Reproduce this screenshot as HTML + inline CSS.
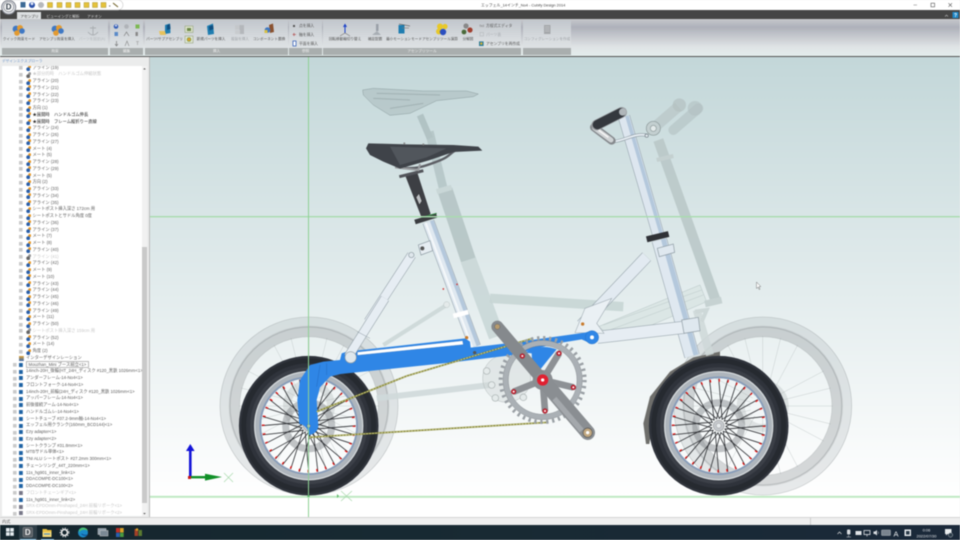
<!DOCTYPE html>
<html lang="ja"><head><meta charset="utf-8"><title>Cubify Design 2014</title>
<style>
html,body{margin:0;padding:0;width:960px;height:540px;overflow:hidden;background:#eee}
body{font-family:"Liberation Sans","Noto Sans CJK JP",sans-serif;position:relative}
#wrap{position:absolute;left:0;top:0;width:960px;height:540px;overflow:hidden;filter:blur(.4px)}
#title{position:absolute;left:0;top:0;width:960px;height:10px;background:#fff}
#tabs{position:absolute;left:0;top:10px;width:960px;height:9px;background:#454545}
#ribbon{position:absolute;left:0;top:19px;width:960px;height:37px;background:linear-gradient(#c6c8cb 0,#aeb1ba 22%,#c8cbd0 50%,#dfe3e5 75%,#e4eeed 100%);border-bottom:1.5px solid #555}
.pn{position:absolute;top:1px;height:35px;background:linear-gradient(#c2c7cd,#d8dcdf 55%,#e2e6e8);border-radius:1px}
.pn i{position:absolute;left:0;right:0;bottom:.5px;height:6.5px;background:#a9aeae;color:#eee;font:normal 3.7px/6.5px "Liberation Sans","Noto Sans CJK JP",sans-serif;text-align:center}
#left{position:absolute;left:0;top:57px;width:150px;height:460px;background:#ebecec;border-right:1px solid #bbb;box-sizing:border-box}
#lt{position:absolute;left:2px;top:0;font-size:3.7px;line-height:8px;color:#6b93c8}
#tree{position:absolute;left:2px;top:9px;width:140px;height:450px;background:#fff;overflow:hidden}
#rows{position:absolute;left:-2px;top:-1.4px;width:150px}
.r{height:6.75px;line-height:6.75px;font-size:4.3px;color:#5c5c5c;white-space:nowrap;padding-left:32.5px;box-sizing:border-box;
background:radial-gradient(circle,#2b5fa8 60%,transparent 66%) 25.5px 2.4px/4.4px 4.4px no-repeat,radial-gradient(circle,#e79a2c 60%,transparent 66%) 28px .6px/3.4px 3.4px no-repeat,linear-gradient(#cacaca,#cacaca) 19.4px 1.6px/3.6px 3.6px no-repeat}
.t{padding-left:26px;background:linear-gradient(#1f63a5,#1f63a5) 18.6px 1.2px/3.8px 4.4px no-repeat,linear-gradient(#cacaca,#cacaca) 12.6px 1.6px/3.6px 3.6px no-repeat}
.g{color:#c8c8c8;background:radial-gradient(circle,#666 60%,transparent 66%) 25.5px 2.4px/4.4px 4.4px no-repeat,radial-gradient(circle,#999 60%,transparent 66%) 28px .6px/3.4px 3.4px no-repeat,linear-gradient(#cacaca,#cacaca) 19.4px 1.6px/3.6px 3.6px no-repeat}
.t.g{background:linear-gradient(#778,#778) 18.6px 1.2px/3.8px 4.4px no-repeat,linear-gradient(#cacaca,#cacaca) 12.6px 1.6px/3.6px 3.6px no-repeat}
.b{color:#222}
.tip span{border:.5px solid #bbb;padding:0 1.5px;background:#fff}
#sb{position:absolute;left:142px;top:9px;width:5px;height:450px;background:#f1f1f1}
#sb b{position:absolute;left:0;top:181px;width:5px;height:256px;background:#c9c9c9}
#status{position:absolute;left:0;top:517px;width:960px;height:8px;background:#efefef;border-top:1px solid #d4d4d4;box-sizing:border-box;font-size:4.2px;line-height:7px;color:#555;padding-left:2px}
#status u{position:absolute;left:810px;top:0;width:1px;height:7px;background:#ccc}
#task{position:absolute;left:0;top:525px;width:960px;height:15px;background:linear-gradient(90deg,#15262e,#182a33 50%,#1b293a)}
svg{position:absolute;left:0;top:0}
svg text{font-family:"Liberation Sans","Noto Sans CJK JP",sans-serif}
</style></head><body><div id="wrap">
<div id="title"></div><div id="tabs"></div>
<div id="ribbon">
<div class="pn" style="left:2px;width:106px"><i>拘束</i></div>
<div class="pn" style="left:110px;width:33px"><i>編集</i></div>
<div class="pn" style="left:145px;width:143px"><i>挿入</i></div>
<div class="pn" style="left:289px;width:33px"><i>参照</i></div>
<div class="pn" style="left:323px;width:198px"><i>アセンブリツール</i></div>
<div class="pn" style="left:523px;width:48px"><i></i></div>
</div>
<div id="left">
<div id="lt">デザインエクスプローラ</div>
<div id="tree"><div id="rows">
<div class="r">アライン (19)</div>
<div class="r g">★部分的時　ハンドルゴム伸縮状態</div>
<div class="r">アライン (20)</div>
<div class="r">アライン (21)</div>
<div class="r">アライン (22)</div>
<div class="r">アライン (23)</div>
<div class="r">方向 (1)</div>
<div class="r b">★展開時　ハンドルゴム伸長</div>
<div class="r b">★展開時　フレーム縦折りー直線</div>
<div class="r">アライン (24)</div>
<div class="r">アライン (26)</div>
<div class="r">アライン (27)</div>
<div class="r">メート (4)</div>
<div class="r">メート (5)</div>
<div class="r">アライン (28)</div>
<div class="r">アライン (29)</div>
<div class="r">メート (5)</div>
<div class="r">方向 (2)</div>
<div class="r">アライン (33)</div>
<div class="r">アライン (34)</div>
<div class="r">アライン (35)</div>
<div class="r">シートポスト挿入深さ 172cm 用</div>
<div class="r">シートポストとサドル角度 0度</div>
<div class="r">アライン (36)</div>
<div class="r">アライン (37)</div>
<div class="r">メート (7)</div>
<div class="r">メート (8)</div>
<div class="r">アライン (40)</div>
<div class="r g">アライン (41)</div>
<div class="r">アライン (42)</div>
<div class="r">メート (9)</div>
<div class="r">メート (10)</div>
<div class="r">アライン (43)</div>
<div class="r">アライン (44)</div>
<div class="r">アライン (45)</div>
<div class="r">アライン (46)</div>
<div class="r">アライン (49)</div>
<div class="r">メート (11)</div>
<div class="r">アライン (50)</div>
<div class="r g">シートポスト挿入深さ 159cm 用</div>
<div class="r">アライン (52)</div>
<div class="r">メート (14)</div>
<div class="r">角度 (2)</div>
<div class="r t" style="background:linear-gradient(#e0a030,#3a6ab0) 18.6px 1px/4.8px 5px no-repeat">インターデザインレーション</div>
<div class="r t tip"><span>Mouzhan_Mini ブース組立&lt;1&gt;</span></div>
<div class="r t">14inch-20H_後輪(HT_24H_ディスク #120_黒鉄 1026mm&lt;1&gt;</div>
<div class="r t">アンダーフレーム-14-No4&lt;1&gt;</div>
<div class="r t">フロントフォーク-14-No4&lt;1&gt;</div>
<div class="r t">14inch-20H_前輪(24H_ディスク #120_黒鉄 1026mm&lt;1&gt;</div>
<div class="r t">アッパーフレーム-14-No4&lt;1&gt;</div>
<div class="r t">前後接続アーム-14-No4&lt;1&gt;</div>
<div class="r t">ハンドルゴムレ-14-No4&lt;1&gt;</div>
<div class="r t">シートチューブ #37.2-9mm軸-14-No4&lt;1&gt;</div>
<div class="r t">エッフェル用クランク(160mm_BCD144)&lt;1&gt;</div>
<div class="r t">Ezy adapter&lt;1&gt;</div>
<div class="r t">Ezy adapter&lt;2&gt;</div>
<div class="r t">シートクランプ #31.8mm&lt;1&gt;</div>
<div class="r t">MTBサドル単体&lt;1&gt;</div>
<div class="r t">TNI ALU シートポスト #27.2mm 300mm&lt;1&gt;</div>
<div class="r t">チェーンリング_44T_220mm&lt;1&gt;</div>
<div class="r t">11s_hg901_inner_link&lt;1&gt;</div>
<div class="r t">DDACOMPE-DC100&lt;1&gt;</div>
<div class="r t">DDACOMPE-DC100&lt;2&gt;</div>
<div class="r t g">フロントチェーンギア&lt;1&gt;</div>
<div class="r t">11s_hg901_inner_link&lt;2&gt;</div>
<div class="r t g">SRX-EPDOmm-Pinshaped_24H 前輪リボーク&lt;1&gt;</div>
<div class="r t g">SRX-EPDOmm-Pinshaped_24H 前輪リボーク&lt;2&gt;</div>
</div></div>
<div id="sb"><b></b></div>
</div>
<div id="status">内式<u></u></div>
<div id="task"></div>

<svg width="960" height="540" viewBox="0 0 960 540">
<defs>
<linearGradient id="bg" x1="0" y1="0" x2="0" y2="1"><stop offset="0" stop-color="#c3d7d9"/><stop offset="1" stop-color="#fff"/></linearGradient>
<line id="s1" x1="3.5" y1="-6" x2="0" y2="-47" stroke="#2a2c30" stroke-width=".8"/>
<line id="s2" x1="-3.5" y1="-6" x2="0" y2="-47" stroke="#2a2c30" stroke-width=".8"/>
<g id="sp"><use href="#s1"/><use href="#s2" transform="rotate(11.25)"/><use href="#s1" transform="rotate(22.5)"/><use href="#s2" transform="rotate(33.75)"/><use href="#s1" transform="rotate(45)"/><use href="#s2" transform="rotate(56.25)"/><use href="#s1" transform="rotate(67.5)"/><use href="#s2" transform="rotate(78.75)"/></g>
<g id="wheel">
<circle r="23" fill="none" stroke="#7c8084" stroke-width="7" opacity=".45"/>
<use href="#sp"/><use href="#sp" transform="rotate(90)"/><use href="#sp" transform="rotate(180)"/><use href="#sp" transform="rotate(270)"/>
<circle r="45.4" fill="none" stroke="#e80c0c" stroke-width="2.8" stroke-dasharray="1.2 7.7"/>
<circle r="5.5" fill="#c4c8cc" stroke="#888" stroke-width=".5"/><circle r="2.4" fill="#e8ecee" stroke="#888" stroke-width=".4"/>
<circle r="51.4" fill="none" stroke="#aeb5bc" stroke-width="7.6"/>
<circle r="48.4" fill="none" stroke="#869bb8" stroke-width="1.8"/>
<circle r="54" fill="none" stroke="#d4d8da" stroke-width="1.2"/>
<circle r="62.3" fill="none" stroke="#2f333b" stroke-width="15"/>
<circle r="57" fill="none" stroke="#3c4048" stroke-width="3"/>
<circle r="65" fill="none" stroke="#262a30" stroke-width="5"/>
</g>
<g id="gw"><g stroke="#bcc4c4" stroke-width=".4">
<line y1="-12" y2="-70"/><line y1="12" y2="70"/><line x1="-12" x2="-70"/><line x1="12" x2="70"/>
<line x1="8" y1="-10" x2="35" y2="-61"/><line x1="-8" y1="-10" x2="-35" y2="-61"/><line x1="8" y1="10" x2="35" y2="61"/><line x1="-8" y1="10" x2="-35" y2="61"/>
<line x1="10" y1="-8" x2="61" y2="-35"/><line x1="-10" y1="-8" x2="-61" y2="-35"/><line x1="10" y1="8" x2="61" y2="35"/><line x1="-10" y1="8" x2="-61" y2="35"/>
<line x1="4" y1="-12" x2="18" y2="-68"/><line x1="12" y1="-4" x2="68" y2="-18"/><line x1="12" y1="4" x2="68" y2="18"/><line x1="4" y1="12" x2="18" y2="68"/><line x1="-4" y1="-12" x2="-18" y2="-68"/><line x1="-12" y1="-4" x2="-68" y2="-18"/><line x1="-12" y1="4" x2="-68" y2="18"/>
</g>
<circle r="84.5" fill="none" stroke="#a0a8aa" stroke-opacity=".24" stroke-width="9"/>
<circle r="75" fill="none" stroke="#8f9799" stroke-opacity=".36" stroke-width="10.5"/>
<circle r="79" fill="none" stroke="#6f7779" stroke-opacity=".3" stroke-width="1"/>
<circle r="89" fill="none" stroke="#8f9697" stroke-opacity=".5" stroke-width=".6"/>
<circle r="69.4" fill="none" stroke="#8f9697" stroke-opacity=".5" stroke-width=".7"/>
<circle r="22" fill="none" stroke="#a6acad" stroke-opacity=".3" stroke-width="8"/>
</g>
</defs>

<!-- viewport -->
<rect x="150" y="57" width="810" height="439" fill="url(#bg)"/>
<rect x="150" y="496" width="810" height="21" fill="#fff"/>

<!-- ghost wheels -->
<use href="#gw" transform="translate(309 406)"/>
<use href="#gw" transform="translate(762.7 406)"/>

<!-- ghost bike & upper parts (zoom 8 coords) -->
<g transform="translate(340 80) scale(.33333)">
<path d="M68 30L100 25 250 33 380 33 415 42 400 50 290 62 210 100 150 106 100 75 70 45Z" fill="#a8b8ba" fill-opacity=".5" stroke="#8fa0a2" stroke-width="1.5"/>
<path d="M100 55L210 60M110 40L300 45M150 85L250 70" stroke="#8a9a9c" stroke-width="3" fill="none" opacity=".5"/>
<path d="M240 105L270 175" stroke="#a9bbbc" stroke-width="20" opacity=".75"/>
<path d="M268 155L312 335" stroke="#b2c3c4" stroke-width="26" opacity=".8"/>
<path d="M315 330L385 540" stroke="#b3c3c3" stroke-width="46" opacity=".85"/>
<path d="M385 540L470 770" stroke="#cad8d8" stroke-width="48" opacity=".9"/>
<path d="M290 335L335 322" stroke="#c9d7d7" stroke-width="16"/>
<path d="M450 655L850 680" stroke="#c8d6d5" stroke-width="28" opacity=".9"/>
<path d="M775 740L1080 615L1100 665L830 780Z" fill="#dbe6e5" stroke="#b6c4c4" stroke-width="1.5"/>
<path d="M790 735L1085 630M810 750L1090 645" stroke="#bcc9c9" stroke-width="1.5"/>
<path d="M955 180L1130 670" stroke="#b9c7c7" stroke-width="31" opacity=".85"/>
<path d="M950 240L1000 228" stroke="#c4d0d0" stroke-width="12"/>
<path d="M1095 672L1145 660" stroke="#c6d2d2" stroke-width="20"/>
<path d="M1065 695L1100 690 1085 725" fill="none" stroke="#cdd8d8" stroke-width="12"/>
<path d="M940 145L1015 80" stroke="#b9c6c7" stroke-width="32" opacity=".7"/>
<path d="M1000 150L1075 85" stroke="#b5c3c4" stroke-width="30" stroke-linecap="round" opacity=".65"/>
<circle cx="1018" cy="75" r="20" fill="#b3c0c1" opacity=".7"/><circle cx="1065" cy="85" r="22" fill="#b3c0c1" opacity=".6"/>
<circle cx="940" cy="145" r="21" fill="#c3cfd0" stroke="#8b9899" stroke-width="2"/><circle cx="940" cy="145" r="9" fill="#e3eaea" stroke="#8b9899" stroke-width="2"/>
<!-- link strut -->
<path d="M215 525L85 725" stroke="#8d9aa2" stroke-width="28"/><path d="M215 525L85 725" stroke="#e6edf3" stroke-width="25"/>
<!-- diagonal strut -->
<path d="M920 530L725 735" stroke="#8d9aa2" stroke-width="36"/><path d="M920 530L725 735" stroke="#e2eaf1" stroke-width="33"/>
<!-- seat tube -->
<path d="M265 425L405 800" stroke="#7f8d98" stroke-width="36"/><path d="M265 425L405 800" stroke="#dfe8f0" stroke-width="33.5"/><path d="M275 422L415 797" stroke="#b4c8dc" stroke-width="11"/><path d="M257 428L397 803" stroke="#fff" stroke-width="6" opacity=".7"/>
<path d="M340 708L385 696" stroke="#fff" stroke-width="14"/>
<path d="M235 495L270 482 278 512 243 525Z" fill="#e6edf2" stroke="#8d9aa2" stroke-width="2"/><circle cx="247" cy="505" r="6" fill="#555"/><circle cx="214" cy="525" r="8" fill="#dfe7ec" stroke="#8d9aa2" stroke-width="2"/>
<circle cx="310" cy="627" r="2.5" fill="#d03030"/><circle cx="351" cy="613" r="2.5" fill="#d03030"/>
<!-- front tube -->
<path d="M852 110L958 475" stroke="#7f8d98" stroke-width="36"/><path d="M852 110L958 475" stroke="#dde6ef" stroke-width="33.5"/><path d="M861 108L967 473" stroke="#b4c8dc" stroke-width="11"/>
<path d="M958 480L1056 828" stroke="#7f8d98" stroke-width="46"/><path d="M958 480L1056 828" stroke="#dfe8f0" stroke-width="43.5"/><path d="M970 477L1068 825" stroke="#b4c8dc" stroke-width="15"/>
<path d="M952 505L1000 492 1004 517 958 530Z" fill="#dfe8ef" stroke="#8d9aa2" stroke-width="2"/>
<path d="M920 478L986 462" stroke="#2f3136" stroke-width="18"/>
<!-- handle -->
<path d="M820 185C860 180 880 160 918 165" fill="none" stroke="#7d8a92" stroke-width="9"/><path d="M820 185C860 180 880 160 918 165" fill="none" stroke="#e6edf3" stroke-width="6"/>
<path d="M762 142L815 182" stroke="#85898d" stroke-width="24" stroke-linecap="round"/><path d="M764 144L813 180" stroke="#cfd3d5" stroke-width="15" stroke-linecap="round"/><path d="M775 150L805 172" stroke="#f4f4f4" stroke-width="5"/>
<path d="M770 135L845 97" stroke="#9a9ea2" stroke-width="32" stroke-linecap="round"/><path d="M772 134L843 98" stroke="#34383e" stroke-width="28" stroke-linecap="round"/>
<circle cx="848" cy="96" r="11" fill="#b0b6ba"/><circle cx="920" cy="167" r="5" fill="#dfe7ec" stroke="#6f7a82" stroke-width="2"/>
<!-- seat post & saddle -->
<path d="M195 285L232 278 272 402 246 416Z" fill="#3d3f44"/>
<path d="M237 340L228 352 238 375 246 363Z" fill="#bcbfc2" stroke="#222" stroke-width="1.5"/>
<path d="M225 426L290 406" stroke="#3a3c40" stroke-width="14"/><path d="M245 412L290 400" stroke="#2c7a3a" stroke-width="3"/>
<path d="M178 290L250 272" stroke="#52545a" stroke-width="9"/>
<path d="M182 263C230 268 250 260 290 245S330 220 345 212" fill="none" stroke="#5c5e64" stroke-width="7"/><path d="M165 262L235 270 240 252" fill="none" stroke="#9a9da0" stroke-width="6"/>
<path d="M78 205L85 190 200 193 340 195 415 200 427 212 340 216 270 240 180 266 130 245 90 225Z" fill="#3f4349"/>
<path d="M150 200L320 205 260 232 180 255Z" fill="#565b62" opacity=".8"/>
<circle cx="193" cy="190" r="3" fill="#888"/><circle cx="250" cy="193" r="3" fill="#888"/>
</g>

<!-- horizontal datum line -->
<rect x="150" y="216" width="810" height="1.4" fill="#a9dcae"/>

<!-- fender -->
<path transform="translate(560 300) scale(.33333)" d="M258 432L250 370 270 290 330 215 400 172 480 155 480 172 400 190 320 245 285 320 268 432Z" fill="#6e6e6b"/>

<!-- front frame parts -->
<g transform="translate(560 300) scale(.33333)">
<path d="M410 30L450 165" stroke="#cfd9d9" stroke-width="24" opacity=".85"/>
<path d="M112 112L372 82" stroke="#8d9aa2" stroke-width="38"/><path d="M112 112L372 82" stroke="#e6edf3" stroke-width="35"/>
<path d="M45 98L75 25 155 -5 110 70 132 100Z" fill="#eaf0f4" stroke="#9aa6ad" stroke-width="1.6"/>
<circle cx="68" cy="72" r="5" fill="#c87a2c"/>
<path d="M365 60L415 52 420 92 372 100Z" fill="#dfe8ef" stroke="#8d9aa2" stroke-width="2"/>
</g>

<!-- real wheels -->
<use href="#wheel" transform="translate(308.7 425.7)"/>
<use href="#wheel" transform="translate(718.7 425.7)"/>

<!-- rear mechanism (zoom 7 coords) -->
<g transform="translate(220 300) scale(.33333)">
<path d="M490 135L680 15" stroke="#cfdada" stroke-width="12"/><circle cx="680" cy="14" r="9" fill="#e4eaea" stroke="#a8b4b4"/>
<path d="M470 295L810 255" stroke="#d0dadb" stroke-width="18" opacity=".9"/>
<circle cx="860" cy="235" r="72" fill="#d0d8d8" fill-opacity=".45" stroke="#b4bcbc" stroke-width="1.5"/>
<circle cx="800" cy="213" r="10" fill="#e4eaea" stroke="#aab2b2" stroke-width="2"/><circle cx="815" cy="255" r="10" fill="#e4eaea" stroke="#aab2b2" stroke-width="2"/><circle cx="826" cy="294" r="10" fill="#e4eaea" stroke="#aab2b2" stroke-width="2"/><circle cx="910" cy="292" r="10" fill="#e4eaea" stroke="#aab2b2" stroke-width="2"/>
<circle cx="740" cy="113" r="5" fill="#c87a2c"/>
<!-- arm -->
<path d="M265 405A30 30 0 0 0 238 372L232 300 240 240 270 195 310 185 360 180 365 160 380 155 735 115 750 125 752 143 900 125 1095 98 1116 92 1136 110 1115 132 1085 118 1000 132 880 165 690 188 362 222 330 230 300 262 290 300 295 378A30 30 0 0 1 265 405Z" fill="#2f86e6"/>
<path d="M300 195L290 260M320 190L320 225" stroke="#2268bd" stroke-width="2" opacity=".7"/>
<path d="M412 156L728 122 730 134 412 166Z" fill="#fff" stroke="#2268bd"/>
<circle cx="266" cy="378" r="5" fill="#c8d0c8" stroke="#444"/>
<circle cx="1116" cy="112" r="20" fill="#2f86e6" stroke="#1f68b8"/><circle cx="1116" cy="112" r="6" fill="#fff"/>
<path d="M385 170L495 -5" stroke="#8d9aa2" stroke-width="28"/><path d="M385 170L495 -5" stroke="#e6edf3" stroke-width="25"/>
<path d="M412 95L450 115" stroke="#8d9aa2" stroke-width="1.5"/>
<circle cx="392" cy="172" r="17" fill="#dfe7ec" stroke="#8d9aa2" stroke-width="2"/>
<circle cx="764" cy="158" r="5" fill="#555"/>
<!-- chain -->
<path d="M290 335L560 228 935 116" fill="none" stroke="#85853a" stroke-width="5"/><path d="M290 335L560 228 935 116" fill="none" stroke="#d4d48f" stroke-width="2.6" stroke-dasharray="5 4"/>
<path d="M268 412L985 367" fill="none" stroke="#85853a" stroke-width="5"/><path d="M268 412L985 367" fill="none" stroke="#d4d48f" stroke-width="2.6" stroke-dasharray="5 4"/>
<!-- chainring -->
<circle cx="968" cy="240" r="126" fill="none" stroke="#9aa0a5" stroke-width="12" stroke-dasharray="7 11"/>
<circle cx="968" cy="240" r="111" fill="none" stroke="#aab0b5" stroke-width="16"/>
<circle cx="968" cy="240" r="119" fill="none" stroke="#7c8286" stroke-width="1.2"/>
<circle cx="968" cy="240" r="103" fill="none" stroke="#7c8286" stroke-width="1.2"/>
<path d="M915 158Q960 130 1010 148L985 178 962 207 936 180 935 160Z" fill="#2f86e6"/>
<path d="M968 240L907 168M968 240L1017 160M968 240L1060 262M968 240L975 333M968 240L881 275" stroke="#8d9195" stroke-width="20"/>
<circle cx="968" cy="240" r="30" fill="#8a8e92"/>
<path d="M832 80L968 240" stroke="#85898d" stroke-width="36" stroke-linecap="round"/>
<circle cx="832" cy="80" r="8" fill="#b79b6e" stroke="#555"/>
<path d="M968 240L1103 398" stroke="#8a8e92" stroke-width="44" stroke-linecap="round"/><path d="M1003 296L1085 392" stroke="#a4a8ac" stroke-width="16"/>
<circle cx="1103" cy="398" r="14" fill="#c2a880" stroke="#555" stroke-width="2"/><circle cx="1103" cy="398" r="5" fill="#fff"/>
<circle cx="968" cy="240" r="17" fill="#e02030"/><circle cx="968" cy="240" r="5" fill="#fff"/>
<g fill="#c02030" stroke="#666"><circle cx="907" cy="168" r="8"/><circle cx="1017" cy="160" r="8"/><circle cx="1060" cy="262" r="8"/><circle cx="975" cy="333" r="8"/><circle cx="881" cy="275" r="8"/></g>
<g fill="#fff"><circle cx="907" cy="168" r="3"/><circle cx="1017" cy="160" r="3"/><circle cx="1060" cy="262" r="3"/><circle cx="975" cy="333" r="3"/><circle cx="881" cy="275" r="3"/></g>
</g>

<!-- datums -->
<rect x="308" y="57" width="1" height="460" fill="#8ed094"/>
<rect x="150" y="495.8" width="810" height="2" fill="#bfe8c2"/>
<path d="M341 491L352 501M352 491L341 501" stroke="#a8d8ac" stroke-width=".7"/><path d="M337 494L337 498 339 496Z" fill="#5cb868"/>
<path d="M307 497L310 497 308.5 494Z" fill="#5cb868"/>
<!-- triad -->
<rect x="189" y="449" width="2.6" height="28" fill="#1414d8"/><path d="M186 451L190.3 444 194.6 451Z" fill="#1414d8"/>
<rect x="191" y="476" width="16" height="2.4" fill="#109028"/><path d="M205 473.8L222 477 205 480.6Z" fill="#109028"/>
<rect x="188" y="476" width="3" height="3" fill="#c81818"/>
<path d="M224 473L233 482M233 473L224 482" stroke="#a8d8ac" stroke-width=".7"/>
<!-- cursor -->
<path d="M756.5 282L756.5 288.5 758 287.2 759.2 289.6 760 289.2 758.8 286.8 760.8 286.6Z" fill="#fff" stroke="#555" stroke-width=".4"/>

<!-- QAT -->
<path d="M8 0H118A5 5 0 0 1 118 10H8Z" fill="#fff" stroke="#c8c8c8" stroke-width=".6"/>
<circle cx="8.7" cy="7.3" r="7" fill="#e4e6ea" stroke="#7a7e88" stroke-width="1"/><circle cx="8.7" cy="6.8" r="5" fill="#f6f6f6" stroke="#444a55" stroke-width=".5"/>
<text x="8.7" y="9.6" font-size="8" font-weight="bold" fill="#3a4550" text-anchor="middle">D</text>
<rect x="20.5" y="2" width="5" height="5.5" fill="#3d6a95"/><circle cx="32" cy="5" r="3" fill="#2a4fa8"/><circle cx="32" cy="3.7" r="1.4" fill="#dfe6f5"/><circle cx="41" cy="5" r="3" fill="#b6b8bc"/>
<g fill="#e5c23a" stroke="#9a8a30" stroke-width=".4"><rect x="47.5" y="2.5" width="5" height="5"/><rect x="57" y="2.5" width="5" height="5"/><rect x="66" y="2.5" width="5" height="5"/><rect x="75" y="2.5" width="5" height="5"/><rect x="84" y="2.5" width="5" height="5"/><rect x="92.5" y="2.5" width="5" height="5"/><rect x="101" y="2.5" width="5" height="5"/></g>
<path d="M109 6h1.4" stroke="#333" stroke-width=".7"/><path d="M113 3L118 7" stroke="#6b5c20" stroke-width="1"/>
<text x="481" y="6.6" font-size="3.9" fill="#444">エッフェル_14インチ_No4 - Cubify Design 2014</text>
<path d="M913.5 5H917" stroke="#999" stroke-width=".7"/><rect x="931" y="3.2" width="3.6" height="3.6" fill="none" stroke="#555" stroke-width=".6"/><path d="M948.5 3.2L952 6.8M952 3.2L948.5 6.8" stroke="#555" stroke-width=".6"/>

<!-- tabs -->
<path d="M17 19V12H41V19Z" fill="#dcdfe1"/>
<text x="29.5" y="17.4" font-size="3.7" fill="#333" text-anchor="middle">アセンブリ</text>
<text x="63" y="17.4" font-size="3.7" fill="#ddd" text-anchor="middle">ビューイングと解析</text>
<text x="94.5" y="17.4" font-size="3.7" fill="#ddd" text-anchor="middle">アドオン</text>
<path d="M945 16.5L946.5 15 948 16.5" stroke="#bbb" fill="none" stroke-width=".6"/><rect x="952.5" y="12" width="6" height="6" fill="#1f88c8"/><text x="955.5" y="17.2" font-size="5" font-weight="bold" fill="#fff" text-anchor="middle">?</text>

<!-- ribbon labels -->
<g font-size="3.6" fill="#555" text-anchor="middle">
<text x="19" y="40">クイック拘束モード</text>
<text x="57" y="40">アセンブリ拘束を挿入</text>
<text x="92" y="40" fill="#b4b8bc">パーツを固定(A)</text>
<text x="164.5" y="40">パーツ/サブアセンブリ</text>
<text x="211" y="40">新規パーツを挿入</text>
<text x="240" y="40" fill="#a0a4a8">複製を挿入</text>
<text x="269" y="40">コンポーネント置換</text>
<text x="345" y="40">回転移動軸切り替え</text>
<text x="375" y="40">補足配置</text>
<text x="404" y="40">最小モーションモード</text>
<text x="440" y="40">アセンブリツール演算</text>
<text x="468" y="40">分解図</text>
<text x="547" y="40" fill="#a0a4a8">コンフィグレーションを作成</text>
</g>
<g font-size="3.8" fill="#555">
<text x="299" y="26.8">点を挿入</text><text x="299" y="36">軸を挿入</text><text x="299" y="45">平面を挿入</text>
<text x="486" y="26.8">方程式エディタ</text><text x="486" y="36" fill="#a8acb0">パーツ表</text><text x="486" y="45">アセンブリを再作成</text>
</g>
<!-- ribbon icons -->
<g>
<circle cx="16" cy="29" r="3.4" fill="#3f78c4"/><circle cx="20" cy="28" r="3" fill="#e39a30"/><circle cx="17" cy="33" r="2.8" fill="#e39a30"/><circle cx="22" cy="31" r="2.8" fill="#3f78c4"/>
<circle cx="55" cy="29" r="3.4" fill="#3f78c4"/><circle cx="59" cy="28" r="3" fill="#e39a30"/><circle cx="56" cy="33" r="2.8" fill="#e39a30"/><circle cx="61" cy="31" r="2.8" fill="#3f78c4"/>
<path d="M93 26V35M90 28H96M88 32Q93 38 98 32" stroke="#a8acb0" stroke-width=".9" fill="none"/>
<circle cx="116" cy="26.5" r="2.3" fill="#3560b8"/><circle cx="116" cy="25.6" r="1" fill="#dde"/><circle cx="126.5" cy="26.5" r="2.3" fill="#b0b3b8"/><rect x="135.5" y="24.5" width="4" height="4" fill="#7cb852"/>
<rect x="114.5" y="32" width="3.5" height="4" fill="#5a8ac8"/><path d="M124 36L126.5 32 129 36" stroke="#777" fill="none" stroke-width=".6"/><rect x="135.5" y="32" width="2.4" height="4" fill="#888"/>
<path d="M116.5 41V45M115 44L116.5 46 118 44" stroke="#666" fill="none" stroke-width=".6"/><path d="M125 46L127 41 129 46" stroke="#888" fill="none" stroke-width=".6"/><path d="M136 41.5L139 41.5M137.5 41.5V45" stroke="#999" fill="none" stroke-width=".6"/>
<path d="M165 25L170 23.5 170.5 33 165 34Z" fill="#1f7db0"/><path d="M167 25L170 24 170.5 29 167 30Z" fill="#0f4e80"/><path d="M159 31H165L166 35H160Z" fill="#e7c25c"/>
<rect x="185" y="26" width="8" height="6.5" fill="#d9e0c8" stroke="#8a9a70" stroke-width=".5"/><rect x="187" y="28" width="4" height="3" fill="#6e8a48"/>
<rect x="185" y="36" width="8" height="7" fill="#dfe4d4" stroke="#8a9a70" stroke-width=".5"/><circle cx="189" cy="39.5" r="2" fill="#d6a030" stroke="#5f9a40" stroke-width=".5"/>
<path d="M207 26L213 23.5 214 34 208 35Z" fill="#1f7db0"/><path d="M209 26.5L213 25 213.6 29 209.5 30.5Z" fill="#0f4e80"/>
<rect x="235" y="25" width="5" height="4.5" fill="#c4c7ca"/><rect x="239.5" y="25" width="4.5" height="9" fill="#b4b7bb"/><rect x="235" y="30" width="5" height="4" fill="#c8cbce"/>
<path d="M269 25L273 23.5 274 32 270 33Z" fill="#8a5230"/><circle cx="267.5" cy="30" r="2.8" fill="#3f78c4"/><rect x="264.5" y="30" width="3" height="3" fill="#d8c040"/>
<rect x="293" y="25" width="2" height="2" fill="#555"/><path d="M292.5 34.5H296M294 33V36" stroke="#a33" stroke-width=".6"/><rect x="293" y="41" width="3" height="5" fill="#fff" stroke="#2250b0" stroke-width=".7"/>
<path d="M345 33V25M343.5 27L345 24.5 346.5 27" stroke="#1a40c8" stroke-width="1" fill="none"/><path d="M340 36L345 33 350 36" stroke="#777" stroke-width=".6" fill="none"/>
<rect x="376" y="24" width="2.5" height="7" fill="#9aa0a8"/><path d="M372 35H381L377 31Z" fill="#a8aeb4"/>
<rect x="398.5" y="25" width="6" height="8.5" fill="#1f7db0"/><path d="M399 24L410 26" stroke="#444" stroke-width=".6"/><path d="M402 28H409" stroke="#777" stroke-width=".6"/>
<circle cx="440" cy="26.5" r="3" fill="#e8c828"/><circle cx="445" cy="26.5" r="2.6" fill="#e8c828"/><circle cx="439" cy="31.5" r="3" fill="#e8c828"/><circle cx="443" cy="32" r="3.2" fill="#2b4fc0"/>
<circle cx="466" cy="26" r="2.6" fill="#888"/><circle cx="470" cy="30" r="2.6" fill="#a04030"/><circle cx="464" cy="32" r="2.4" fill="#4a6a3a"/>
<text x="479.5" y="27" font-size="3.4" fill="#777">fxd</text><rect x="480" y="32.5" width="3.5" height="3.5" fill="none" stroke="#b0b3b6" stroke-width=".5"/><rect x="479" y="41.4" width="4.6" height="4.6" fill="#2f7d9a"/><circle cx="481.3" cy="43.6" r="1.2" fill="#d8b030"/>
<rect x="544" y="25" width="6.5" height="9" fill="#a4a7aa"/><path d="M545 27H549.5M545 29H549.5M545 31H549.5" stroke="#d6d8da" stroke-width=".5"/>
</g>

<!-- taskbar -->
<g>
<rect x="19" y="525" width="18" height="15" fill="#2f3f48"/><rect x="20" y="539" width="16" height="1" fill="#7fb8dc"/><rect x="41" y="539" width="13" height="1" fill="#7fb8dc"/>
<rect x="6" y="528" width="3.6" height="3.6" fill="#e8eef2"/><rect x="10.2" y="528" width="3.6" height="3.6" fill="#e8eef2"/><rect x="6" y="532.2" width="3.6" height="3.6" fill="#e8eef2"/><rect x="10.2" y="532.2" width="3.6" height="3.6" fill="#e8eef2"/>
<rect x="23" y="527.5" width="9.5" height="9.5" rx="1" fill="#555c62" stroke="#aaa" stroke-width=".4"/><text x="27.8" y="535" font-size="8" font-weight="bold" fill="#eee" text-anchor="middle">D</text>
<path d="M42.5 529H46.5L47.5 530H51.5V537H42.5Z" fill="#e9c044"/><rect x="42.5" y="532" width="9" height="5" fill="#f2d878"/><rect x="44" y="533.5" width="6" height="1" fill="#3a88c8"/>
<circle cx="64.5" cy="532.5" r="3" fill="none" stroke="#eee" stroke-width="1.6"/><circle cx="64.5" cy="532.5" r="4.4" fill="none" stroke="#eee" stroke-width="1" stroke-dasharray="1.2 1.4"/>
<circle cx="83" cy="532.5" r="5" fill="#1a8ac8"/><path d="M79 530A5 5 0 0 1 88 531Q85.5 529 82 530T80 534Q79 532 79 530Z" fill="#4ec06c"/><path d="M81.5 534Q84 536 87.5 535" stroke="#134a90" fill="none"/>
<rect x="98" y="528.5" width="8" height="6" fill="#8a9aa8" stroke="#ccc" stroke-width=".5"/><rect x="100" y="530.5" width="8" height="5.5" fill="#7a8894" stroke="#ccc" stroke-width=".5"/>
<rect x="116" y="528" width="3.7" height="4.5" fill="#c03028"/><rect x="120" y="528" width="3.7" height="4.5" fill="#d8a028"/><rect x="116" y="532.8" width="3.7" height="4.2" fill="#2a60b0"/><rect x="120" y="532.8" width="3.7" height="4.2" fill="#4a9a40"/>
<rect x="134.5" y="529" width="3.5" height="7" fill="#a04028"/><rect x="138.5" y="530" width="3.5" height="6" fill="#5a7a30"/><circle cx="137" cy="529.5" r="1.3" fill="#d8a028"/>
<path d="M837.5 534L839.5 532 841.5 534" fill="none" stroke="#ddd" stroke-width=".7"/>
<rect x="847" y="529.5" width="3.4" height="5" rx="1" fill="#d8dce0"/><path d="M848.6 535V537M846.5 537H851" stroke="#d8dce0" stroke-width=".5"/>
<rect x="855.5" y="531" width="6" height="4" fill="#dfe3e6"/><rect x="864" y="530.5" width="6" height="4" fill="none" stroke="#dfe3e6" stroke-width=".8"/><path d="M867 534.5V536.5" stroke="#dfe3e6" stroke-width=".7"/>
<path d="M873.5 531.5H875L877 530V535.5L875 534H873.5Z" fill="#d8dce0"/><path d="M878 531.5Q879.3 532.8 878 534" stroke="#ccc" fill="none" stroke-width=".5"/>
<rect x="881.5" y="530" width="9" height="5.5" rx=".5" fill="#7a848e" stroke="#c8ccd0" stroke-width=".4"/>
<text x="896" y="536.6" font-size="7.5" fill="#e8ecee" text-anchor="middle">A</text>
<rect x="904.5" y="529.5" width="6.5" height="6.5" fill="#e8ecee"/><rect x="906" y="531" width="3.6" height="3.6" fill="#2a3a48"/>
<text x="926.5" y="531.5" font-size="4" fill="#dfe3e6" text-anchor="middle">0:06</text><text x="926.5" y="537.5" font-size="4" fill="#dfe3e6" text-anchor="middle">2022/07/30</text>
<path d="M945 529H951.5V534H947.5L946 535.5V534H945Z" fill="#e8ecee"/><circle cx="950.5" cy="535" r="2.2" fill="#2a3a48" stroke="#dfe3e6" stroke-width=".4"/>
</g>
<!-- scrollbar arrows -->
<path d="M143.2 69.5L144.5 68 145.8 69.5Z" fill="#555"/><path d="M143.2 513L144.5 514.5 145.8 513Z" fill="#555"/>
</svg>
</div></body></html>
